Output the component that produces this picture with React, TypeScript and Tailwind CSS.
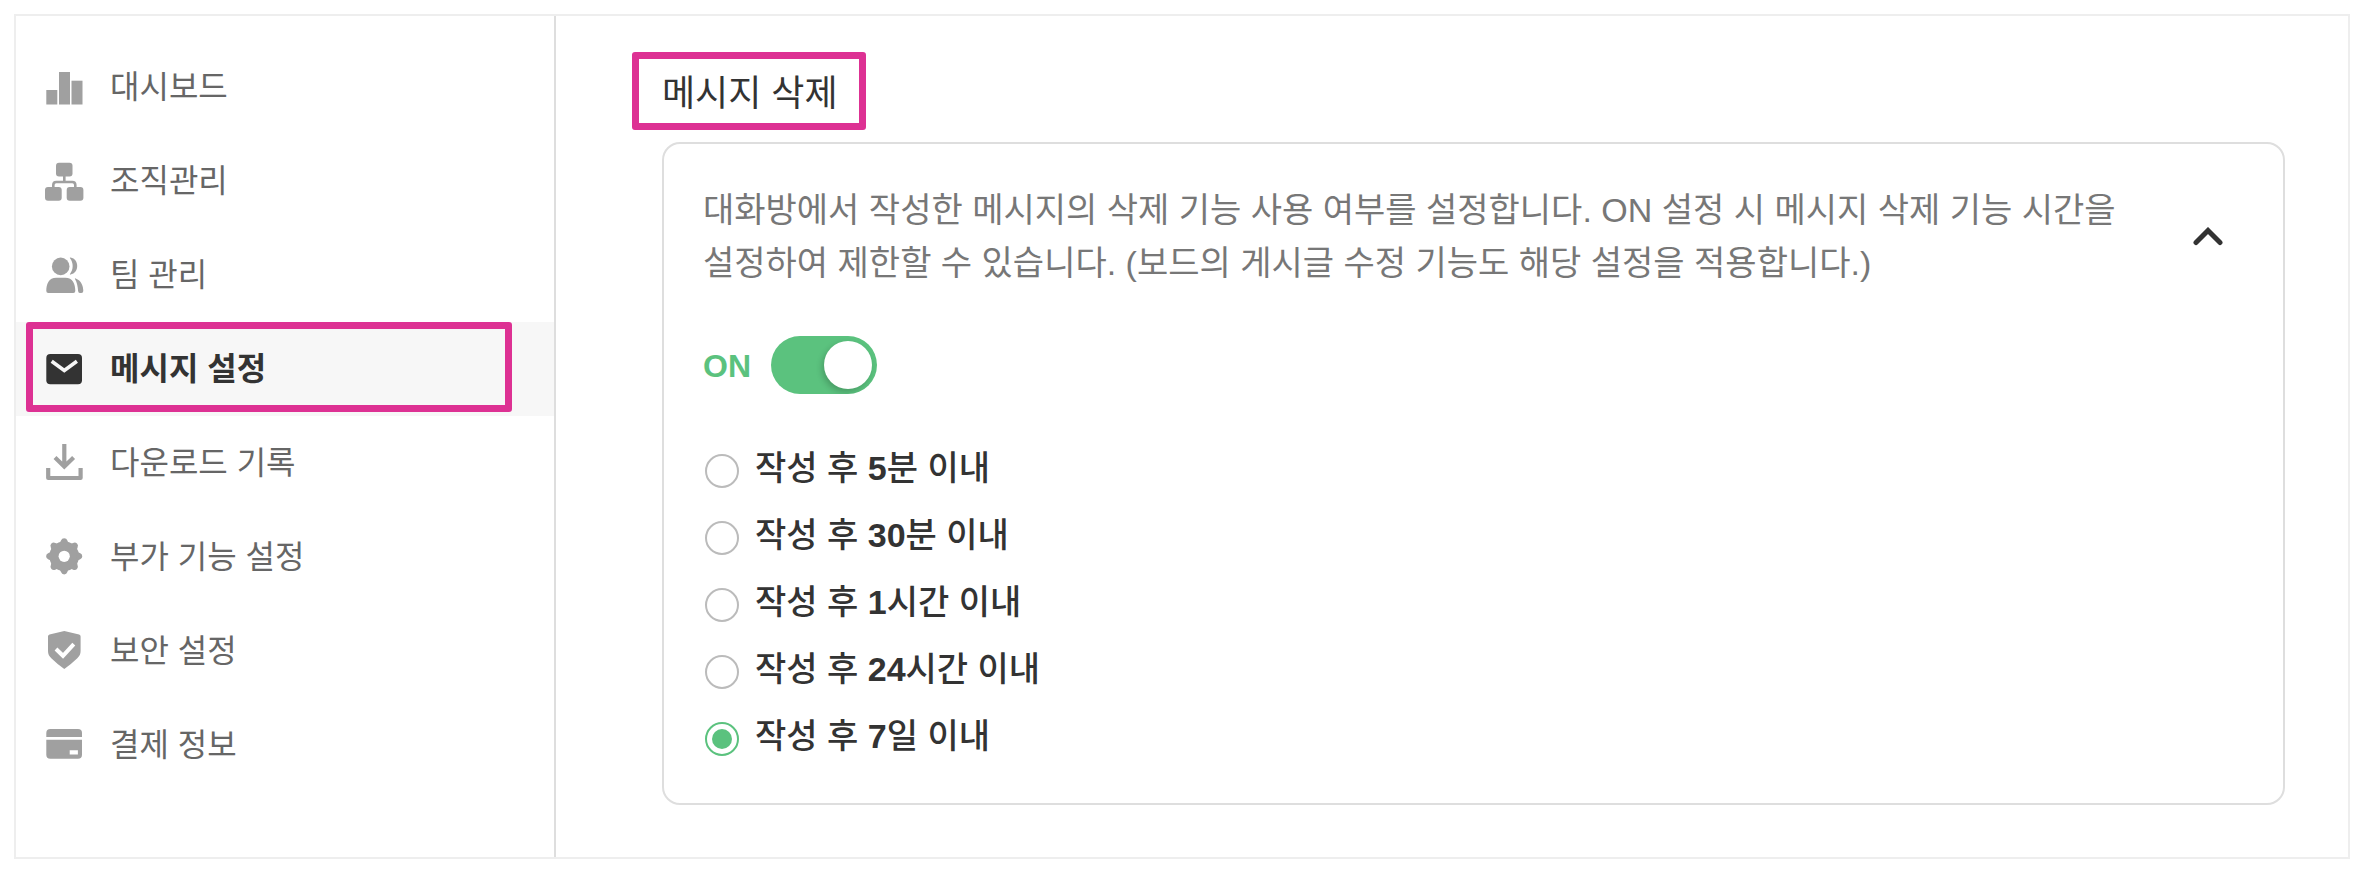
import { useState } from "react";
import type { ReactNode } from "react";

type NavItem = { label: string; icon: ReactNode; active?: boolean };

const GEAR_TEETH = [0, 45, 90, 135, 180, 225, 270, 315];

const NAV_ITEMS: NavItem[] = [
  {
    label: "대시보드",
    icon: (
      <>
        <rect x="2.300" y="24" width="11" height="14.500" />
        <rect x="15" y="6" width="11" height="32.500" />
        <rect x="27.500" y="14.700" width="11" height="23.800" />
      </>
    ),
  },
  {
    label: "조직관리",
    icon: (
      <>
        <rect x="12" y="2.700" width="16.500" height="13.800" rx="3" />
        <rect x="1" y="27" width="16.700" height="13.800" rx="3" />
        <rect x="22.700" y="27" width="16.700" height="13.800" rx="3" />
        <path
          d="M20.300 15v7M9.300 28v-3q0-3 3-3h16q3 0 3 3v3"
          fill="none"
          stroke="currentColor"
          strokeWidth="2.600"
        />
      </>
    ),
  },
  {
    label: "팀 관리",
    icon: (
      <>
        <circle cx="16.700" cy="12.400" r="8.800" />
        <path d="M26 4.200q-.5-.8.500-.6c9 1.400 9 15.600 0 17q-1 .2-.5-.7c3.600-4.800 3.600-10.900 0-15.700Z" />
        <path d="M2.300 37c0-7 2.500-13.300 10-13.300h9c7.500 0 10 6.300 10 13.300q0 2-2 2h-25q-2 0-2-2Z" />
        <path d="M31 25q-.5-1 .7-.6c5.600 2 7.600 7.600 7.600 12.600q0 2-2 2h-1.500q-1.500 0-1.700-2c-.3-4.500-1-8.500-3.100-12Z" />
      </>
    ),
  },
  {
    label: "메시지 설정",
    active: true,
    icon: (
      <>
        <rect x="2.300" y="6" width="35.700" height="30.300" rx="4" />
        <path d="M7.700 13.300l12.600 9.200 12.600-9.200" fill="none" stroke="#f7f7f7" strokeWidth="3.600" />
      </>
    ),
  },
  {
    label: "다운로드 기록",
    icon: (
      <>
        <path d="M20.300 2v22.500M11 15.500l9.300 9 9.300-9" fill="none" stroke="currentColor" strokeWidth="4.200" />
        <path
          d="M4.200 26v10h32.400V26"
          fill="none"
          stroke="currentColor"
          strokeWidth="4.200"
          strokeLinejoin="round"
        />
      </>
    ),
  },
  {
    label: "부가 기능 설정",
    icon: (
      <>
        <circle cx="20.200" cy="20.300" r="14.800" />
        {GEAR_TEETH.map((angle) => (
          <path
            key={angle}
            d="M13.200 8.300Q16.400 7.600 17 4.600Q17.800 2.200 20.200 2.200Q22.600 2.200 23.400 4.600Q24 7.600 27.200 8.300Z"
            transform={`rotate(${angle} 20.200 20.300)`}
          />
        ))}
        <circle cx="20.200" cy="20.300" r="5.600" fill="#fff" />
      </>
    ),
  },
  {
    label: "보안 설정",
    icon: (
      <>
        <path d="M20.300 1l14.800 3.600q1.500.4 1.500 2V21c0 3-1 5-3.300 7.300Q28 33.500 20.300 39Q12.500 33.500 7.300 28.300C5 26 4 24 4 21V6.600q0-1.600 1.500-2Z" />
        <path d="M12 19l7 6.800 10.800-11.600" fill="none" stroke="#fff" strokeWidth="4" />
      </>
    ),
  },
  {
    label: "결제 정보",
    icon: (
      <>
        <path d="M2.300 13V9q0-4 4-4H34q4 0 4 4v4Z" />
        <path fillRule="evenodd" d="M2.300 15.700H38v15q0 4-4 4H6.300q-4 0-4-4ZM25.700 26.300v4.200h8.200v-4.200Z" />
      </>
    ),
  },
];

const LIMITS = [
  { id: "5m", amount: "5", unit: "분 이내" },
  { id: "30m", amount: "30", unit: "분 이내" },
  { id: "1h", amount: "1", unit: "시간 이내" },
  { id: "24h", amount: "24", unit: "시간 이내" },
  { id: "7d", amount: "7", unit: "일 이내" },
];

/** Pink outline that points at a part of the screen. */
function Highlight({ className }: { className: string }) {
  return (
    <span
      aria-hidden="true"
      className={`pointer-events-none absolute rounded-[3px] border-[7px] border-[#dd3193] ${className}`}
    />
  );
}

function Sidebar() {
  return (
    <nav className="w-[540px] shrink-0 border-r-2 border-[#dedede] pt-6">
      <ul>
        {NAV_ITEMS.map((item) => (
          <li key={item.label} className="relative">
            <a
              href="#"
              aria-current={item.active ? "page" : undefined}
              className={`flex h-[94px] items-center gap-[26px] pl-7 text-[32px] ${
                item.active ? "bg-[#f7f7f7] font-bold text-[#333333]" : "text-[#666666]"
              }`}
            >
              <svg
                viewBox="0 0 40 42"
                aria-hidden="true"
                className={`h-[42px] w-10 shrink-0 ${item.active ? "text-[#333333]" : "text-[#a0a0a0]"}`}
                fill="currentColor"
              >
                {item.icon}
              </svg>
              {item.label}
            </a>
            {item.active && <Highlight className="top-0 right-[42px] bottom-1 left-[10px]" />}
          </li>
        ))}
      </ul>
    </nav>
  );
}

export default function App() {
  const [enabled, setEnabled] = useState(true);
  const [limit, setLimit] = useState("7d");
  const [open, setOpen] = useState(true);

  return (
    <div className="bg-white px-[14px] pt-[14px] pb-5 font-['Liberation_Sans','Noto_Sans_CJK_KR',sans-serif]">
      <div className="flex border-2 border-[#eeeeee]">
        <Sidebar />
        <main className="min-w-0 grow pt-[42px] pr-[63px] pb-[52px] pl-[106px]">
          <h1 className="relative inline-block text-[36px] leading-[72px] text-[#333333]">
            메시지 삭제
            <Highlight className="-top-1.5 -right-7 bottom-0 -left-[30px]" />
          </h1>
          <section className="mt-3 rounded-[18px] border-2 border-[#dedede] pt-10 pr-[60px] pb-[31px] pl-[39px]">
            <div className="flex items-center justify-between gap-10">
              <p className="max-w-[1440px] text-[34px] leading-[53px] break-keep text-[#777777]">
                대화방에서 작성한 메시지의 삭제 기능 사용 여부를 설정합니다. ON 설정 시 메시지 삭제 기능 시간을
                설정하여 제한할 수 있습니다. (보드의 게시글 수정 기능도 해당 설정을 적용합니다.)
              </p>
              <button type="button" aria-label="접기" aria-expanded={open} onClick={() => setOpen(!open)}>
                <svg viewBox="0 0 30 20" className="h-5 w-[30px]" aria-hidden="true">
                  <path
                    d="M3 15.500L15 3.500l12 12"
                    fill="none"
                    stroke="#333333"
                    strokeWidth="5"
                    strokeLinecap="round"
                  />
                </svg>
              </button>
            </div>
            {open && (
              <>
                <label className="mt-[46px] flex w-fit items-center gap-5 text-[32px] font-bold text-[#5bc27e]">
                  <span className="pt-0.5">{enabled ? "ON" : "OFF"}</span>
                  <input
                    type="checkbox"
                    role="switch"
                    checked={enabled}
                    onChange={(e) => setEnabled(e.target.checked)}
                    className="h-[58px] w-[106px] appearance-none overflow-hidden rounded-full bg-[#cccccc] p-[5px] before:block before:size-12 before:rounded-full before:bg-white before:shadow-[-2px_3px_6px_rgba(0,0,0,0.2)] checked:bg-[#5bc27e] checked:before:ml-12"
                  />
                </label>
                <fieldset className="mt-[43px]">
                  {LIMITS.map((option) => (
                    <label
                      key={option.id}
                      className="flex h-[67px] w-fit items-center gap-4 text-[34px] font-medium text-[#333333]"
                    >
                      <input
                        type="radio"
                        name="limit"
                        checked={limit === option.id}
                        onChange={() => setLimit(option.id)}
                        className="ml-0.5 size-[34px] appearance-none rounded-full border-2 border-[#bbbbbb] bg-white p-[5px] checked:border-[#5bc27e] checked:before:block checked:before:size-5 checked:before:rounded-full checked:before:bg-[#5bc27e]"
                      />
                      <span className="pb-1">
                        작성 후 <b>{option.amount}</b>
                        {option.unit}
                      </span>
                    </label>
                  ))}
                </fieldset>
              </>
            )}
          </section>
        </main>
      </div>
    </div>
  );
}
